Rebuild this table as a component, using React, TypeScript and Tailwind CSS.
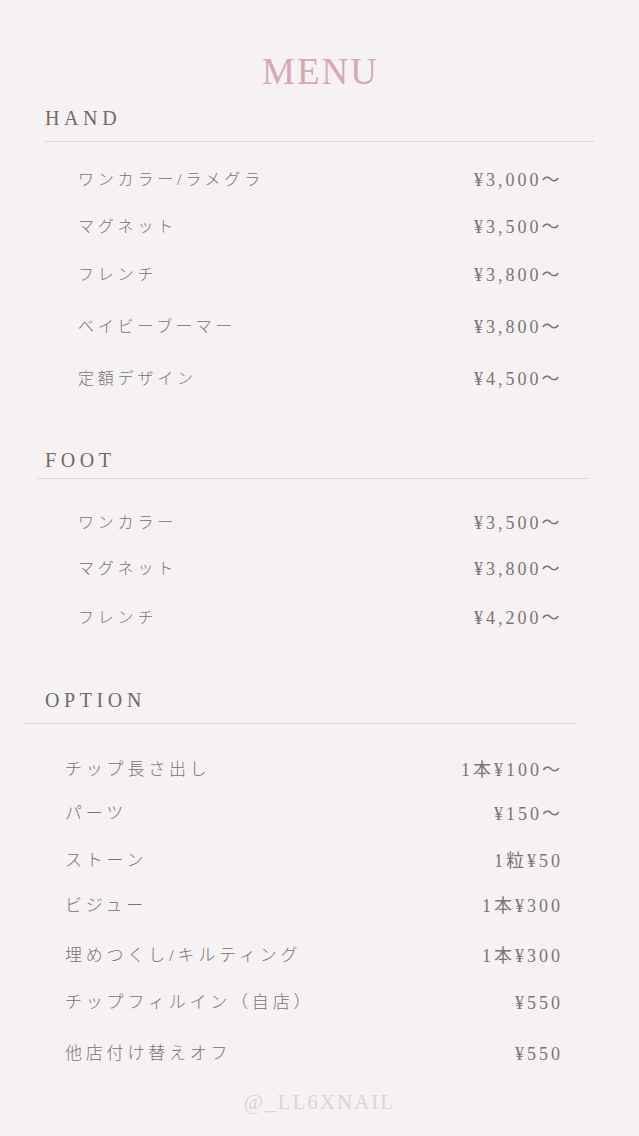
import React from "react";

type Row = { name: string; price: string; mt: string };

const hand: Row[] = [
  { name: "ワンカラー/ラメグラ", price: "¥3,000〜", mt: "mt-[23px]" },
  { name: "マグネット", price: "¥3,500〜", mt: "mt-[17px]" },
  { name: "フレンチ", price: "¥3,800〜", mt: "mt-[18px]" },
  { name: "ベイビーブーマー", price: "¥3,800〜", mt: "mt-[22px]" },
  { name: "定額デザイン", price: "¥4,500〜", mt: "mt-[22px]" },
];

const foot: Row[] = [
  { name: "ワンカラー", price: "¥3,500〜", mt: "mt-[29px]" },
  { name: "マグネット", price: "¥3,800〜", mt: "mt-[16px]" },
  { name: "フレンチ", price: "¥4,200〜", mt: "mt-[19px]" },
];

const option: Row[] = [
  { name: "チップ長さ出し", price: "1本¥100〜", mt: "mt-[31px]" },
  { name: "パーツ", price: "¥150〜", mt: "mt-[14px]" },
  { name: "ストーン", price: "1粒¥50", mt: "mt-[17px]" },
  { name: "ビジュー", price: "1本¥300", mt: "mt-[15px]" },
  { name: "埋めつくし/キルティング", price: "1本¥300", mt: "mt-[20px]" },
  { name: "チップフィルイン（自店）", price: "¥550", mt: "mt-[17px]" },
  { name: "他店付け替えオフ", price: "¥550", mt: "mt-[21px]" },
];

const serif = "font-['Liberation_Serif','Noto_Sans_CJK_JP',serif]";

function Heading({ text, mt }: { text: string; mt: string }) {
  return (
    <div
      className={`${mt} pl-[45px] h-[20px] leading-[20px] text-[20px] tracking-[4.6px] text-[#6f6b6b] ${serif}`}
    >
      {text}
    </div>
  );
}

function MainRow({ r }: { r: Row }) {
  return (
    <div className={`${r.mt} h-[30px] grid grid-cols-[396px_1fr] pl-[78px] items-center`}>
      <span className={`text-[16px] leading-[30px] tracking-[3.8px] font-light text-[#777373] ${serif}`}>
        {r.name}
      </span>
      <span className={`text-[18px] leading-[30px] tracking-[3px] text-[#7a7676] ${serif}`}>
        {r.price}
      </span>
    </div>
  );
}

function OptRow({ r }: { r: Row }) {
  return (
    <div className={`${r.mt} h-[30px] flex justify-between items-center pl-[65px] pr-[76px]`}>
      <span className={`text-[17px] leading-[30px] tracking-[3.8px] font-light text-[#777373] ${serif}`}>
        {r.name}
      </span>
      <span className={`text-[18px] leading-[30px] tracking-[3px] text-[#7a7676] ${serif}`}>
        {r.price}
      </span>
    </div>
  );
}

export default function App() {
  return (
    <div className="w-[639px] h-[1136px] bg-[#f6f2f3] overflow-hidden flex flex-col">
      <div
        className={`mt-[50px] h-[44px] leading-[44px] text-center text-[37px] tracking-[2px] pl-[2px] font-light text-[#d6a8b3] ${serif}`}
      >
        MENU
      </div>

      <Heading text="HAND" mt="mt-[14px]" />
      <div className="mt-[13px] ml-[45px] w-[549px] h-px bg-[#dcd5d7]" />
      {hand.map((r) => (
        <MainRow key={r.name} r={r} />
      ))}

      <Heading text="FOOT" mt="mt-[56px]" />
      <div className="mt-[8px] ml-[37px] w-[551px] h-px bg-[#dcd5d7]" />
      {foot.map((r) => (
        <MainRow key={r.name} r={r} />
      ))}

      <Heading text="OPTION" mt="mt-[57px]" />
      <div className="mt-[13px] ml-[24px] w-[552px] h-px bg-[#dcd5d7]" />
      {option.map((r) => (
        <OptRow key={r.name} r={r} />
      ))}

      <div
        className={`mt-[21px] h-[24px] leading-[24px] text-center text-[21px] tracking-[2px] text-[#e1d0d4] ${serif}`}
      >
        @_LL6XNAIL
      </div>
    </div>
  );
}
